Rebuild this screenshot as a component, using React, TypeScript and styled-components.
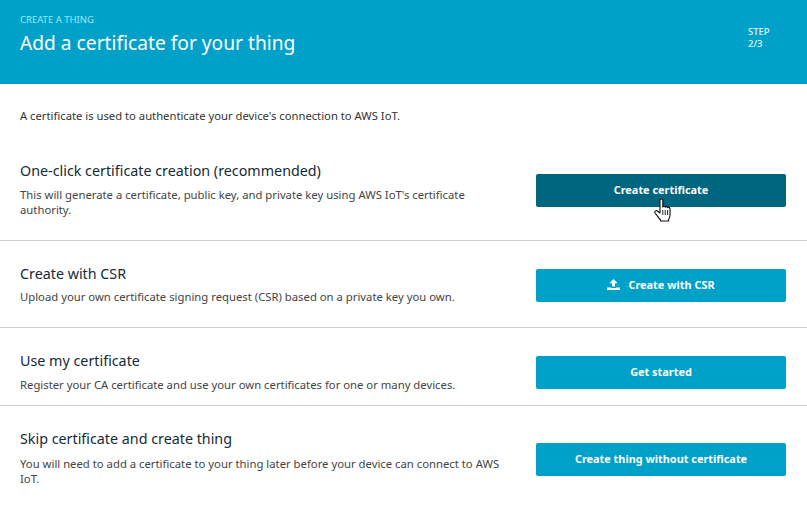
import React from "react";
import styled, { createGlobalStyle } from "styled-components";

const GlobalStyle = createGlobalStyle`
  html, body {
    margin: 0;
    padding: 0;
    background: #fff;
    font-family: "Noto Sans", "Open Sans", sans-serif;
  }
`;

const Page = styled.div`
  width: 807px;
  height: 505px;
  overflow: hidden;
`;

const Header = styled.header`
  height: 84px;
  box-sizing: border-box;
  background-color: #00a1c9;
  padding: 14px 21px 0 20px;
  display: flex;
  justify-content: space-between;
`;

const Eyebrow = styled.div`
  font-size: 9.5px;
  line-height: 12px;
  color: #9fe6f7;
`;

const Title = styled.h1`
  margin: 4px 0 0;
  font-size: 19.2px;
  line-height: 26px;
  font-weight: 400;
  color: #fff;
`;

const Step = styled.div`
  width: 38px;
  margin-top: 12px;
  font-size: 9.5px;
  line-height: 12px;
  font-weight: 500;
  color: #e4f7fc;
`;

const Intro = styled.p`
  margin: 0;
  padding: 24px 20px 0;
  height: 54px;
  box-sizing: border-box;
  font-size: 11.26px;
  line-height: 16px;
  color: #333;
`;

const Row = styled.section<{ $height: number; $last?: boolean }>`
  height: ${(p) => p.$height}px;
  box-sizing: border-box;
  padding: 23px 21px 0 20px;
  border-bottom: ${(p) => (p.$last ? "none" : "1px solid #ccc")};
`;

const RowMain = styled.div`
  display: flex;
  align-items: center;
  justify-content: space-between;
`;

const RowText = styled.div`
  width: 490px;
`;

const RowTitle = styled.h2`
  margin: 0;
  font-size: 14.3px;
  line-height: 20px;
  font-weight: 400;
  color: #152939;
`;

const RowBody = styled.p<{ $gap: number }>`
  margin: ${(p) => p.$gap}px 0 0;
  font-size: 11.3px;
  line-height: 15px;
  color: #444;
`;

const ActionWrap = styled.div<{ $offset: number }>`
  position: relative;
  margin-top: ${(p) => p.$offset}px;
`;

const Button = styled.button<{ $active?: boolean }>`
  width: 250px;
  height: 33px;
  border: none;
  border-radius: 2px;
  padding: 0 0 2px;
  display: flex;
  align-items: center;
  justify-content: center;
  gap: 8px;
  background-color: ${(p) => (p.$active ? "#00667f" : "#00a1c9")};
  color: #fff;
  font-family: inherit;
  font-size: 10.9px;
  font-weight: 700;
`;

const Pointer = styled.svg`
  position: absolute;
  left: 118px;
  top: 24px;
`;

const UploadIcon = () => (
  <svg width="13" height="11" viewBox="0 0 13 11" fill="#fff">
    <path d="M6.5 0 10.5 4.2H8V7.5H5V4.2H2.5Z" />
    <path d="M0 8.5H4V9H9V8.5H13V11H0Z" />
  </svg>
);

const HandCursor = () => (
  <Pointer width="18" height="24" viewBox="0 0 18 24">
    <path
      d="M6 2C6 .6 8.8 .6 8.8 2V9C9.2 8 11 8 11.2 9.2 11.6 8.3 13.4 8.4 13.6 9.6 14 9 15.8 9.2 16 10.6V17C16 19 15.2 20.5 14.6 21.5V23H6.6V22C5 20.5 3 17.5 1 15 .2 13.5 2 12 3.5 13L6 15Z"
      fill="#fff"
      stroke="#111"
      strokeWidth="1.1"
      strokeLinejoin="round"
    />
    <path d="M8.8 12V17M11.2 12V17M13.6 12V17" stroke="#111" strokeWidth="0.9" fill="none" />
  </Pointer>
);

const rows = [
  {
    height: 103,
    gap: 6,
    offset: 2,
    title: "One-click certificate creation (recommended)",
    body: "This will generate a certificate, public key, and private key using AWS IoT's certificate authority.",
  },
  {
    height: 87,
    gap: 5,
    offset: 2,
    title: "Create with CSR",
    body: "Upload your own certificate signing request (CSR) based on a private key you own.",
  },
  {
    height: 78,
    gap: 6,
    offset: 2,
    title: "Use my certificate",
    body: "Register your CA certificate and use your own certificates for one or many devices.",
  },
  {
    height: 99,
    gap: 7,
    offset: 4,
    title: "Skip certificate and create thing",
    body: "You will need to add a certificate to your thing later before your device can connect to AWS IoT.",
  },
];

const actions = [
  <>
    <Button $active>Create certificate</Button>
    <HandCursor />
  </>,
  <Button>
    <UploadIcon />
    Create with CSR
  </Button>,
  <Button>Get started</Button>,
  <Button>Create thing without certificate</Button>,
];

export default function App() {
  return (
    <Page>
      <GlobalStyle />
      <Header>
        <div>
          <Eyebrow>CREATE A THING</Eyebrow>
          <Title>Add a certificate for your thing</Title>
        </div>
        <Step>
          STEP
          <br />
          2/3
        </Step>
      </Header>
      <Intro>A certificate is used to authenticate your device's connection to AWS IoT.</Intro>
      {rows.map((row, i) => (
        <Row key={row.title} $height={row.height} $last={i === rows.length - 1}>
          <RowMain>
            <RowText>
              <RowTitle>{row.title}</RowTitle>
              <RowBody $gap={row.gap}>{row.body}</RowBody>
            </RowText>
            <ActionWrap $offset={row.offset}>{actions[i]}</ActionWrap>
          </RowMain>
        </Row>
      ))}
    </Page>
  );
}
